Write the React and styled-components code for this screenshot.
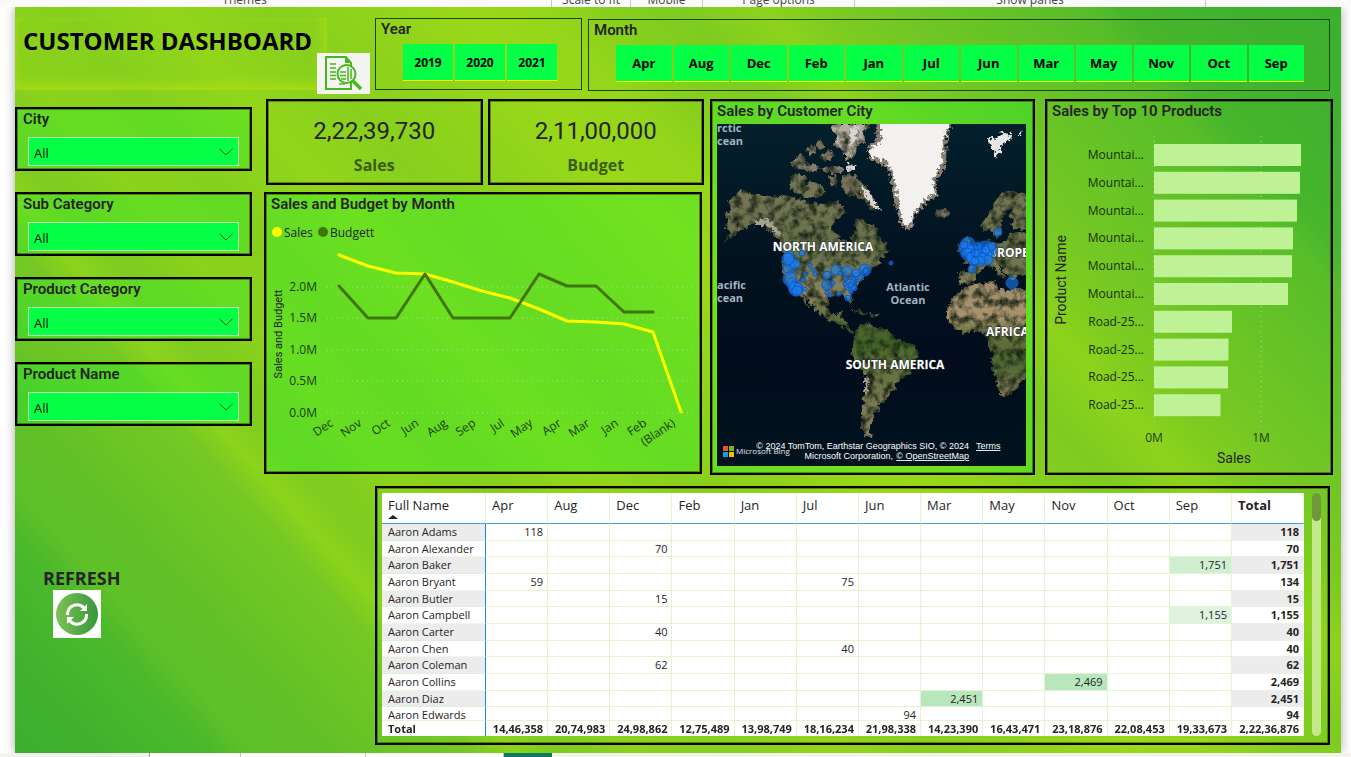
import React from "react";
import styled, { createGlobalStyle } from "styled-components";

const UI = '"Open Sans", "Noto Sans", sans-serif';
const DIN = 'Roboto, "Liberation Sans", sans-serif';

const GlobalStyle = createGlobalStyle`
  * { box-sizing: border-box; }
  html, body { margin: 0; }
  body { background: #fff; color: #252423; font-family: ${UI}; overflow-x: hidden; }
`;

const Page = styled.div`
  display: flex;
  flex-direction: column;
  min-height: 100vh;
`;

/* Ribbon and tab strip */
const Ribbon = styled.div`
  position: relative;
  z-index: 1;
  display: flex;
  align-items: flex-end;
  height: 7px;
  overflow: hidden;
  background: #fafafa;
`;

const RibbonGroup = styled.span`
  flex: ${(p) => p.$grow} 1 0;
  min-width: 0;
  min-height: 7px;
  border-right: 1px solid ${(p) => (p.$divided ? "#c8c6c4" : "transparent")};
  color: #444;
  font-size: 12px;
  line-height: 14px;
  text-align: center;
  white-space: nowrap;
`;

const TabStrip = styled.div`
  display: flex;
  height: 4px;
  background: #f3f2f1;
`;

const Tab = styled.span`
  flex: ${(p) => p.$grow} 1 0;
  background: ${(p) => p.$fill};
  border-right: 1px solid ${(p) => p.$edge || "transparent"};
`;

/* Report canvas */
const Canvas = styled.main`
  flex: 1;
  margin: 0 10px 0 15px;
  padding: 11px 0 8px;
  box-shadow: 0 0 10px rgba(0, 0, 0, 0.35);
  background: linear-gradient(
    48deg,
    #3cb02e 0%,
    #3fb12d 4%,
    #45b62c 7%,
    #4cb92b 10%,
    #5fc028 12%,
    #62c027 16%,
    #6ac525 19%,
    #72c824 22%,
    #76c923 23%,
    #8cd31c 25%,
    #7fcc20 27%,
    #82ce1f 29%,
    #8bd21c 31%,
    #86d01e 36%,
    #92d61a 41%,
    #88d01e 46%,
    #8fd41b 51%,
    #99d819 56%,
    #94d61a 60%,
    #84ce1e 64%,
    #7ecc20 67%,
    #8dd31c 71%,
    #7ccb20 74%,
    #74c724 77%,
    #6ac525 80%,
    #60c028 84%,
    #58bd29 87%,
    #47b62c 89%,
    #40b22d 94%,
    #3cb02e 100%
  );
`;

const Header = styled.header`
  display: flex;
  align-items: flex-start;
  padding-right: 11px;
`;

const TitleBox = styled.div`
  position: relative;
  flex: 0 0 312px;
  height: 72px;
  margin-right: 48px;
  box-shadow: inset -3px -6px 12px rgba(172, 222, 20, 0.8), inset 3px 0 6px rgba(168, 220, 20, 0.4);
`;

const PageTitle = styled.h1`
  margin: 0;
  padding-left: 8px;
  color: #000;
  font-size: 24px;
  font-weight: 700;
  line-height: 46px;
  white-space: nowrap;
`;

const ReportIcon = styled.svg`
  position: absolute;
  left: 302px;
  top: 35px;
  width: 53px;
  height: 41px;
  background: #f4f5f3;
`;

const TilePanel = styled.fieldset`
  flex: ${(p) => (p.$fixed ? `0 0 ${p.$fixed}` : "1 1 0")};
  min-width: 0;
  height: 72px;
  margin: ${(p) => p.$margin || 0};
  padding: 0;
  border: 1px solid #24400a;
`;

const VisualTitle = styled.h2`
  margin: 0;
  padding: 0 5px;
  color: #252423;
  font-family: ${DIN};
  font-size: 15px;
  font-weight: 600;
  line-height: 20px;
  white-space: nowrap;
`;

const Tiles = styled.div`
  display: grid;
  grid-auto-flow: column;
  grid-auto-columns: minmax(0, 1fr);
  gap: 2px;
  padding: 5px ${(p) => p.$inset} 0 27px;
`;

const Tile = styled.button`
  height: 37px;
  padding: 0;
  border: 0;
  border-bottom: 1px solid #f6ff00;
  background: #04ff46;
  color: #000;
  font-family: ${UI};
  font-size: ${(p) => p.$size};
  font-weight: 700;
`;

const Body = styled.div`
  display: flex;
  gap: 12px;
  padding: 8px 8px 0 0;
`;

const Sidebar = styled.aside`
  display: flex;
  flex-direction: column;
  flex: 0 0 237px;
  gap: 21px;
  padding-top: 8px;
`;

const Panel = styled.section`
  min-width: 0;
  border: 2px solid #000;
  box-shadow: inset 0 0 0 1px rgba(0, 0, 0, 0.35);
  background: ${(p) => (p.$tinted ? "rgba(8, 250, 50, 0.27)" : "transparent")};
`;

const SlicerPanel = styled(Panel)`
  height: 64px;
`;

const SlicerLabel = styled.label`
  display: block;
  padding-left: 6px;
  font-family: ${DIN};
  font-size: 15px;
  font-weight: 600;
  line-height: 20px;
`;

const SelectWrap = styled.div`
  position: relative;
  margin: 8px 11px 0;
`;

const Select = styled.select`
  display: block;
  width: 100%;
  height: 29px;
  padding: 3px 5px 0;
  appearance: none;
  border: 1px solid #b8f3b0;
  border-radius: 0;
  background: #04ff46;
  color: #111;
  font-family: ${UI};
  font-size: 13px;
`;

const Chevron = styled.svg`
  position: absolute;
  right: 6px;
  top: 11px;
  width: 14px;
  height: 8px;
  pointer-events: none;
`;

const Refresh = styled.div`
  margin-top: 119px;
  padding-left: 28px;
`;

const RefreshTitle = styled.h2`
  margin: 0;
  color: #252423;
  font-size: 18px;
  font-weight: 700;
  line-height: 24px;
`;

const RefreshButton = styled.button`
  display: block;
  width: 48px;
  height: 48px;
  margin-left: 10px;
  padding: 0;
  border: 0;
  background: #fff;
`;

const Main = styled.div`
  flex: 1;
  min-width: 0;
  display: flex;
  flex-direction: column;
  gap: 11px;
`;

const Visuals = styled.div`
  display: grid;
  grid-template-columns: minmax(0, 440fr) minmax(0, 325fr) minmax(0, 292fr);
  column-gap: 6px;
`;

const Overview = styled.div`
  display: flex;
  flex-direction: column;
  gap: 7px;
`;

const Cards = styled.div`
  display: grid;
  grid-template-columns: 1fr 1fr;
  gap: 5px;
  padding-left: 2px;
`;

const Card = styled(Panel)`
  height: 86px;
  padding-top: 14px;
  text-align: center;
`;

const CardValue = styled.div`
  font-family: ${DIN};
  font-size: 24px;
  line-height: 32px;
`;

const CardLabel = styled.div`
  padding-top: 4px;
  color: #3b5c0c;
  font-size: 16px;
  font-weight: 700;
  line-height: 28px;
`;

const TrendPanel = styled(Panel)`
  margin-right: 2px;
`;

const ProductsPanel = styled(Panel)`
  margin-left: 4px;
`;

const Chart = styled.svg`
  display: block;
  width: 100%;
  height: auto;
  font-family: ${UI};
`;

const MapFrame = styled.div`
  margin: 3px 7px 7px 5px;
`;

const TablePanel = styled(Panel)`
  display: flex;
  gap: 8px;
  height: 259px;
  margin: 0 3px 0 111px;
  padding: 5px 7px 7px 5px;
`;

const TableView = styled.div`
  flex: 1;
  min-width: 0;
  overflow: hidden;
  height: 243px;
  background: #fff;
`;

const Table = styled.table`
  width: 100%;
  table-layout: fixed;
  border-collapse: separate;
  border-spacing: 0;
  font-size: 11px;
  line-height: 14px;
`;

const NameCol = styled.col`
  width: 104px;
`;

const TotalCol = styled.col`
  width: 72px;
`;

const HeadCell = styled.th`
  position: relative;
  height: 31px;
  padding: 3px 6px 0;
  border-right: 1px solid #e3f5d0;
  border-bottom: 1px solid #3d9be9;
  font-size: 13px;
  font-weight: ${(p) => (p.$bold ? 700 : 400)};
  line-height: 18px;
  text-align: left;
  vertical-align: top;
`;

const SortMark = styled.span`
  position: absolute;
  left: 6px;
  bottom: 4px;
  border: 5px solid transparent;
  border-top: 0;
  border-bottom: 4px solid #252423;
`;

const Row = styled.tr`
  height: 17px;
  &:nth-child(3n + 2) { height: 16px; }
`;

const NameCell = styled.th`
  padding: 0 6px;
  border-right: 1px solid #1a86d9;
  border-bottom: 1px solid ${(p) => (p.$shade ? "#dfeeda" : "#eef8e4")};
  background: ${(p) => (p.$shade ? "#ececec" : "#fff")};
  font-weight: 400;
  text-align: left;
  white-space: nowrap;
`;

const heat = { 1: "#d0eed2", 2: "#dff3e0", 3: "#b9e7bd" };

const Cell = styled.td`
  padding: 0 4px;
  border-right: 1px solid #e3f5d0;
  border-bottom: 1px solid #e3f5d0;
  background: ${(p) => heat[p.$heat] || "transparent"};
  text-align: right;
`;

const TotalCell = styled.td`
  padding: 0 5px;
  border-bottom: 1px solid #e8f3de;
  background: ${(p) => (p.$shade ? "#ececec" : "#fff")};
  font-weight: 700;
  text-align: right;
`;

const Foot = styled.tfoot`
  position: sticky;
  bottom: 0;
  background: #fff;
  font-weight: 700;
`;

const FootCell = styled.td`
  height: 16px;
  padding: 0 4px;
  border-top: 1px solid #e3f5d0;
  border-right: 1px solid ${(p) => (p.$name ? "#1a86d9" : "#e3f5d0")};
  text-align: ${(p) => (p.$name ? "left" : "right")};
  ${(p) => p.$name && "padding-left: 6px;"}
  white-space: nowrap;
`;

const ScrollTrack = styled.div`
  flex: 0 0 9px;
  border-radius: 5px;
  background: #c4e98b;
`;

const ScrollThumb = styled.div`
  height: 28px;
  border-radius: 5px;
  background: #6f983b;
`;

const years = ["2019", "2020", "2021"];
const months = ["Apr", "Aug", "Dec", "Feb", "Jan", "Jul", "Jun", "Mar", "May", "Nov", "Oct", "Sep"];
const slicers = ["City", "Sub Category", "Product Category", "Product Name"];

const people = [
  ["Aaron Adams", { Apr: "118" }, "118"],
  ["Aaron Alexander", { Dec: "70" }, "70"],
  ["Aaron Baker", { Sep: "1,751" }, "1,751", 1],
  ["Aaron Bryant", { Apr: "59", Jul: "75" }, "134"],
  ["Aaron Butler", { Dec: "15" }, "15"],
  ["Aaron Campbell", { Sep: "1,155" }, "1,155", 2],
  ["Aaron Carter", { Dec: "40" }, "40"],
  ["Aaron Chen", { Jul: "40" }, "40"],
  ["Aaron Coleman", { Dec: "62" }, "62"],
  ["Aaron Collins", { Nov: "2,469" }, "2,469", 3],
  ["Aaron Diaz", { Mar: "2,451" }, "2,451", 3],
  ["Aaron Edwards", { Jun: "94" }, "94"],
];

const totals = [
  "14,46,358", "20,74,983", "24,98,862", "12,75,489", "13,98,749", "18,16,234",
  "21,98,338", "14,23,390", "16,43,471", "23,18,876", "22,08,453", "19,33,673",
];

const trendMonths = ["Dec", "Nov", "Oct", "Jun", "Aug", "Sep", "Jul", "May", "Apr", "Mar", "Jan", "Feb", "(Blank)"];
const trendTicks = [["2.0M", 73], ["1.5M", 104], ["1.0M", 136], ["0.5M", 167], ["0.0M", 199]];

function TrendChart() {
  return (
    <Chart viewBox="0 0 434 258" role="img" aria-label="Sales and Budget by Month">
      <circle cx="11" cy="18" r="5" fill="#fbff00" />
      <text x="18" y="23" fontSize="12" fill="#252423">Sales</text>
      <circle cx="57" cy="18" r="5" fill="#41750a" />
      <text x="64" y="23" fontSize="12" fill="#252423">Budgett</text>
      <text transform="translate(16 120) rotate(-90)" textAnchor="middle" fontFamily={DIN} fontSize="11" fill="#252423">
        Sales and Budgett
      </text>
      {trendTicks.map(([label, y]) => (
        <g key={label}>
          <line x1="61" x2="427" y1={y} y2={y} stroke="#b5d89b" strokeWidth="1" strokeDasharray="1 4" />
          <text x="51" y={y + 4} textAnchor="end" fontSize="12" fill="#1c3d0d">{label}</text>
        </g>
      ))}
      {trendMonths.map((m, i) => (
        <text key={m} transform={`translate(${68 + i * 28.5} 211) rotate(-34)`} textAnchor="end" fontSize="12" fill="#1c3d0d">
          {m}
        </text>
      ))}
      <polyline
        fill="none" stroke="#fbff00" strokeWidth="3" strokeLinejoin="round" strokeLinecap="round"
        points="73,41 102,52 130,59 159,60 187,68 216,77 244,84 273,95 301,107 330,108 358,110 387,118 415,198"
      />
      <polyline
        fill="none" stroke="#41750a" strokeWidth="3" strokeLinejoin="round" strokeLinecap="round"
        points="73,72 102,104 130,104 159,60 187,104 216,104 244,104 273,60 301,72 330,72 358,98 387,98"
      />
    </Chart>
  );
}

const products = [
  ["Mountai...", 147], ["Mountai...", 146], ["Mountai...", 143], ["Mountai...", 139], ["Mountai...", 138],
  ["Mountai...", 134], ["Road-25...", 78], ["Road-25...", 74.5], ["Road-25...", 74], ["Road-25...", 66.5],
];

function ProductsChart() {
  return (
    <Chart viewBox="0 0 284 352" role="img" aria-label="Sales by Top 10 Products">
      {[107, 214].map((x) => (
        <line key={x} x1={x} x2={x} y1="15" y2="308" stroke="#b0d89c" strokeWidth="1" strokeDasharray="1 4" />
      ))}
      {products.map(([name, w], i) => (
        <g key={i}>
          <text x="97" y={38 + i * 27.8} textAnchor="end" fontSize="12" fill="#173009">{name}</text>
          <rect x="107" y={23 + i * 27.8} width={w} height="22" fill="#bff296" />
        </g>
      ))}
      <text x="107" y="321" textAnchor="middle" fontSize="12" fill="#1c3d0d">0M</text>
      <text x="214" y="321" textAnchor="middle" fontSize="12" fill="#1c3d0d">1M</text>
      <text x="187" y="342" textAnchor="middle" fontFamily={DIN} fontSize="14" fill="#252423">Sales</text>
      <text transform="translate(19 159) rotate(-90)" textAnchor="middle" fontFamily={DIN} fontSize="14" fill="#252423">
        Product Name
      </text>
    </Chart>
  );
}

const bubbles = [
  [72, 132, 5], [74, 138, 5], [72, 144, 6], [78, 140, 5], [71, 135, 6], [85, 129, 3], [93, 141, 2], [96, 146, 2],
  [98, 150, 2], [88, 150, 2], [73, 155, 7], [75, 159, 5], [77, 163, 6], [79, 165, 7], [81, 163, 4], [80, 167, 5],
  [86, 156, 2], [88, 165, 2], [110, 151, 4], [119, 146, 5], [123, 149, 2], [130, 147, 5], [110, 161, 5], [116, 159, 2],
  [148, 146, 6], [149, 147, 3], [141, 153, 5], [139, 149, 4], [136, 156, 3], [133, 161, 6], [134, 161, 3], [129, 155, 2],
  [128, 160, 2], [137, 164, 3], [110, 169, 2], [113, 171, 2], [122, 170, 2], [131, 174, 3], [134, 168, 2], [174, 139, 2],
  [251, 120, 7], [249, 125, 7], [255, 128, 7], [250, 130, 6], [257, 134, 7], [254, 133, 5], [258, 129, 4], [262, 130, 5],
  [268, 124, 7], [272, 127, 7], [269, 131, 6], [265, 134, 5], [271, 136, 5], [275, 122, 4], [269, 126, 4], [263, 137, 5],
  [255, 145, 4], [281, 108, 4], [295, 159, 6], [258, 137, 4], [247, 121, 4], [261, 122, 4],
];

const land = {
  america:
    "M23 66 L32 69 41 71 54 73 71 71 84 76 95 79 107 80 115 78 122 83 128 86 124 92 117 97 115 106 122 113 128 115 131 123 134 122 134 113 139 107 137 97 143 94 149 99 154 103 158 101 162 112 170 122 172 128 163 134 158 136 166 138 156 144 148 148 145 157 138 163 133 169 136 177 133 180 129 172 120 171 112 173 110 182 114 190 121 190 126 186 124 194 129 197 131 204 137 207 136 210 128 204 120 199 110 195 101 189 93 178 87 171 91 180 95 186 89 180 83 170 72 162 67 153 65 140 67 128 62 117 54 108 46 101 38 99 28 104 17 112 6 117 15 109 8 104 11 98 8 90 15 86 10 78 16 74Z",
  south:
    "M140 206 L144 201 151 199 158 203 167 205 175 208 179 215 188 219 198 222 202 229 197 238 194 248 189 253 181 257 177 265 171 273 167 279 161 281 162 286 156 291 157 297 152 303 152 310 157 315 148 311 144 304 144 293 146 281 148 269 150 252 143 244 138 236 134 228 137 217Z",
  africa:
    "M245 164 L254 161 265 159 277 158 280 164 290 167 299 165 315 167 315 250 303 258 301 264 293 271 285 273 281 266 278 252 274 240 276 230 270 221 270 213 264 208 255 207 246 209 239 205 233 199 229 192 231 183 237 173Z",
  europe:
    "M241 148 L252 148 253 142 246 137 256 133 264 126 269 123 271 116 275 120 283 119 290 116 294 109 302 108 315 110 315 150 300 152 296 158 290 152 284 143 280 139 286 149 289 155 282 151 276 143 270 142 264 145 259 154 255 159 242 160Z",
  nordic:
    "M265 106 L264 99 271 92 276 81 283 72 292 66 302 69 315 72 315 104 298 105 293 101 298 95 292 94 297 84 290 86 285 95 285 104 281 114 276 111 274 103 270 108Z",
};

function WorldMap() {
  const label = { fontSize: 12, fontWeight: 700, fill: "#fff", stroke: "#2b3436", strokeWidth: 1, paintOrder: "stroke" };
  const sea = { fontSize: 11, fontWeight: 700, fill: "#a3b5c4" };
  const credit = { fontSize: 9, fontFamily: '"Liberation Sans", sans-serif', fill: "#fff" };
  return (
    <Chart viewBox="0 0 309 342" role="img" aria-label="Sales by Customer City">
      <defs>
        <linearGradient id="ocean" x1="0" y1="0" x2="0" y2="1">
          <stop offset="0" stopColor="#03202c" />
          <stop offset="0.4" stopColor="#02121f" />
          <stop offset="0.7" stopColor="#020c1c" />
          <stop offset="1" stopColor="#02131f" />
        </linearGradient>
        <linearGradient id="soil" gradientUnits="userSpaceOnUse" x1="0" y1="60" x2="0" y2="310">
          <stop offset="0" stopColor="#787659" />
          <stop offset="0.25" stopColor="#667048" />
          <stop offset="0.45" stopColor="#8a8560" />
          <stop offset="0.55" stopColor="#56683a" />
          <stop offset="0.63" stopColor="#3d6424" />
          <stop offset="0.72" stopColor="#5f6f3c" />
          <stop offset="0.85" stopColor="#76784c" />
          <stop offset="1" stopColor="#8a7e68" />
        </linearGradient>
        <linearGradient id="sahara" gradientUnits="userSpaceOnUse" x1="0" y1="160" x2="0" y2="272">
          <stop offset="0" stopColor="#a08c6c" />
          <stop offset="0.3" stopColor="#a8946f" />
          <stop offset="0.45" stopColor="#66713d" />
          <stop offset="0.7" stopColor="#4d6832" />
          <stop offset="1" stopColor="#807456" />
        </linearGradient>
        <filter id="terrain" x="-5%" y="-5%" width="110%" height="110%" colorInterpolationFilters="sRGB">
          <feTurbulence type="fractalNoise" baseFrequency="0.22" numOctaves="3" seed="4" result="rough" />
          <feDisplacementMap in="SourceGraphic" in2="rough" scale="7" xChannelSelector="R" yChannelSelector="G" result="coast" />
          <feTurbulence type="fractalNoise" baseFrequency="0.12" numOctaves="4" seed="9" result="n" />
          <feColorMatrix in="n" type="matrix" values="0 0 0 0 0.1  0 0 0 0 0.14  0 0 0 0 0.08  2.4 0 0 0 -0.95" result="dark" />
          <feComposite in="dark" in2="coast" operator="in" result="shade" />
          <feMerge>
            <feMergeNode in="coast" />
            <feMergeNode in="shade" />
          </feMerge>
        </filter>
        <filter id="ice" x="-5%" y="-5%" width="110%" height="110%" colorInterpolationFilters="sRGB">
          <feTurbulence type="fractalNoise" baseFrequency="0.3" numOctaves="3" seed="2" result="rough" />
          <feDisplacementMap in="SourceGraphic" in2="rough" scale="9" xChannelSelector="R" yChannelSelector="G" />
        </filter>
        <clipPath id="frame"><rect width="309" height="342" /></clipPath>
      </defs>
      <g clipPath="url(#frame)">
        <rect width="309" height="342" fill="url(#ocean)" />
        <g filter="url(#terrain)" fill="url(#soil)">
          <path d={land.america} />
          <path d={land.south} />
          <path d={land.europe} />
          <path d={land.nordic} />
          <path d={land.africa} fill="url(#sahara)" />
          <path d="M73 53 L82 49 90 54 86 61 95 58 104 60 109 67 101 74 88 74 80 70 74 66Z" />
          <path d="M75 38 L82 31 90 33 87 41 96 40 103 43 96 48 84 45 76 44Z M90 24 L97 21 99 29 92 31Z M104 31 L111 26 118 30 113 37 106 36Z M104 44 L116 42 128 44 124 49 110 49Z" fill="#857d69" />
          <path d="M112 53 L119 50 121 60 114 63Z M124 52 L133 49 141 55 150 64 157 75 161 85 154 86 148 78 139 72 131 72 124 62Z M98 19 L105 17 108 24 101 25Z M114 80 L121 77 127 82 121 87Z" fill="#776f58" />
          <path d="M113 3 L120 0 153 0 147 9 148 18 139 23 137 34 129 36 126 26 118 23 119 12Z" fill="#b7aea0" />
          <path d="M220 86 L228 85 233 89 230 93 222 93 218 90Z" fill="#80796a" />
          <path d="M246 116 L251 113 253 121 258 129 251 132 247 128 249 122Z M241 122 L245 121 245 127 240 128Z" />
          <path d="M134 186 L142 186 151 190 144 191Z M154 190 L162 191 160 194 153 193Z" fill="#5a6642" />
        </g>
        <g filter="url(#ice)">
          <path d="M158 -6 L238 -6 230 14 229 40 219 58 220 72 207 81 199 91 193 106 184 102 180 86 175 68 173 50 166 40 154 37 149 24 160 15Z" fill="#857d70" />
          <path d="M164 -6 L234 -6 226 16 225 40 216 55 218 69 205 78 197 89 191 103 185 98 183 84 179 66 176 48 169 36 154 33 152 26 164 18Z" fill="#f3f1f0" />
          <path d="M272 13 L280 14 285 9 294 10 293 17 286 19 283 27 280 34 277 27 273 22Z M301 8 L305 9 303 11Z" fill="#e6e6e2" />
          <path d="M143 61 L150 65 157 78 163 86 158 85 149 73Z M129 41 L137 40 138 46 130 47Z M133 4 L141 3 139 14 134 22Z" fill="#d9d6d0" />
          <path d="M36 98 L46 94 55 99 65 110 61 111 50 101 38 101Z M148 247 L151 259 149 273 147 270Z" fill="#a9a294" />
        </g>
        <text x="106" y="127" textAnchor="middle" {...label}>NORTH AMERICA</text>
        <text x="178" y="245" textAnchor="middle" {...label}>SOUTH AMERICA</text>
        <text x="271" y="133" {...label}>UROPE</text>
        <text x="269" y="212" {...label}>AFRICA</text>
        <text x="0" y="8" {...sea}>rctic</text>
        <text x="0" y="21" {...sea}>cean</text>
        <text x="0" y="165" {...sea}>acific</text>
        <text x="0" y="178" {...sea}>cean</text>
        <text x="191" y="167" textAnchor="middle" {...sea}>Atlantic</text>
        <text x="191" y="180" textAnchor="middle" {...sea}>Ocean</text>
        {bubbles.map(([cx, cy, r], i) => (
          <circle key={i} cx={cx} cy={cy} r={r} fill="#1a7ef0" fillOpacity="0.6" stroke="#0a58cc" strokeWidth="1" />
        ))}
        <rect x="6" y="322" width="5" height="5" fill="#f25022" />
        <rect x="12" y="322" width="5" height="5" fill="#7fba00" />
        <rect x="6" y="328" width="5" height="5" fill="#00a4ef" />
        <rect x="12" y="328" width="5" height="5" fill="#ffb900" />
        <text x="19" y="330" fontSize="8" fill="#e8e8e8">Microsoft Bing</text>
        <text x="252" y="325" textAnchor="end" {...credit}>© 2024 TomTom, Earthstar Geographics SIO, © 2024</text>
        <a href="#terms"><text x="259" y="325" textDecoration="underline" {...credit}>Terms</text></a>
        <text x="176" y="335" textAnchor="end" {...credit}>Microsoft Corporation,</text>
        <a href="#osm"><text x="252" y="335" textAnchor="end" textDecoration="underline" {...credit}>© OpenStreetMap</text></a>
      </g>
    </Chart>
  );
}

function Slicer({ name }) {
  const id = name.toLowerCase().replace(/ /g, "-");
  return (
    <SlicerPanel $tinted>
      <SlicerLabel htmlFor={id}>{name}</SlicerLabel>
      <SelectWrap>
        <Select id={id}><option>All</option></Select>
        <Chevron viewBox="0 0 14 8" fill="none" stroke="#1d5c1d" aria-hidden="true">
          <path d="M0.5 0.8 L7 7 L13.5 0.8" />
        </Chevron>
      </SelectWrap>
    </SlicerPanel>
  );
}

export default function App() {
  return (
    <Page>
      <GlobalStyle />
      <Ribbon>
        <RibbonGroup $grow={489}>Themes</RibbonGroup>
        <RibbonGroup $grow={61} $divided />
        <RibbonGroup $grow={78} $divided>Scale to fit</RibbonGroup>
        <RibbonGroup $grow={71} $divided>Mobile</RibbonGroup>
        <RibbonGroup $grow={151} $divided>Page options</RibbonGroup>
        <RibbonGroup $grow={350} $divided>Show panes</RibbonGroup>
        <RibbonGroup $grow={144} />
      </Ribbon>

      <Canvas>
        <Header>
          <TitleBox>
            <PageTitle>CUSTOMER DASHBOARD</PageTitle>
            <ReportIcon viewBox="0 0 53 41" fill="none" stroke="#42b814" strokeWidth="2" aria-hidden="true">
              <path d="M34 29 V36 H9 V4 H29 L34 10 V13" />
              <path d="M28 3 V10 H35 Z" fill="#42b814" stroke="none" />
              <path d="M13 11 H19 M13 15 H19 M13 19 H19 M13 22.500 H19 M13 26 H19 M22 31 H28" strokeWidth="1.600" />
              <circle cx="29.500" cy="21" r="9" fill="#f4f5f3" />
              <path d="M23 19 H29 M23 22.500 H29 M24 26 H29" strokeWidth="1.600" />
              <path d="M31 14 V28 M34 16 V26" strokeWidth="1.500" />
              <path d="M36 28 L44 36" strokeWidth="3.500" />
            </ReportIcon>
          </TitleBox>
          <TilePanel $fixed="207px" aria-label="Year">
            <VisualTitle>Year</VisualTitle>
            <Tiles $inset="24px">
              {years.map((y) => <Tile key={y} $size="12px">{y}</Tile>)}
            </Tiles>
          </TilePanel>
          <TilePanel $margin="1px 0 0 6px" aria-label="Month">
            <VisualTitle>Month</VisualTitle>
            <Tiles $inset="25px">
              {months.map((m) => <Tile key={m} $size="13px">{m}</Tile>)}
            </Tiles>
          </TilePanel>
        </Header>

        <Body>
          <Sidebar>
            {slicers.map((s) => <Slicer key={s} name={s} />)}
            <Refresh>
              <RefreshTitle>REFRESH</RefreshTitle>
              <RefreshButton aria-label="Refresh">
                <svg viewBox="0 0 48 48" width="48" height="48" aria-hidden="true">
                  <defs>
                    <linearGradient id="disc"><stop offset="0" stopColor="#7cc255" /><stop offset="1" stopColor="#38973a" /></linearGradient>
                  </defs>
                  <circle cx="24" cy="24" r="21" fill="url(#disc)" />
                  <g fill="none" stroke="#fff" strokeWidth="3">
                    <path d="M14.500 25 A9.500 9.500 0 0 1 31 18" />
                    <path d="M33.500 24 A9.500 9.500 0 0 1 17 31" />
                  </g>
                  <path d="M34 14 V21 H27 Z M14 34 V27 H21 Z" fill="#fff" />
                </svg>
              </RefreshButton>
            </Refresh>
          </Sidebar>

          <Main>
            <Visuals>
              <Overview>
                <Cards>
                  <Card><CardValue>2,22,39,730</CardValue><CardLabel>Sales</CardLabel></Card>
                  <Card><CardValue>2,11,00,000</CardValue><CardLabel>Budget</CardLabel></Card>
                </Cards>
                <TrendPanel $tinted>
                  <VisualTitle>Sales and Budget by Month</VisualTitle>
                  <TrendChart />
                </TrendPanel>
              </Overview>
              <Panel $tinted>
                <VisualTitle>Sales by Customer City</VisualTitle>
                <MapFrame><WorldMap /></MapFrame>
              </Panel>
              <ProductsPanel>
                <VisualTitle>Sales by Top 10 Products</VisualTitle>
                <ProductsChart />
              </ProductsPanel>
            </Visuals>

            <TablePanel>
              <TableView>
                <Table>
                  <colgroup>
                    <NameCol />
                    {months.map((m) => <col key={m} />)}
                    <TotalCol />
                  </colgroup>
                  <thead>
                    <tr>
                      <HeadCell>Full Name<SortMark /></HeadCell>
                      {months.map((m) => <HeadCell key={m}>{m}</HeadCell>)}
                      <HeadCell $bold>Total</HeadCell>
                    </tr>
                  </thead>
                  <tbody>
                    {people.map(([name, sales, total, level], i) => (
                      <Row key={name}>
                        <NameCell scope="row" $shade={i % 2 === 0}>{name}</NameCell>
                        {months.map((m) => (
                          <Cell key={m} $heat={sales[m] && level}>{sales[m]}</Cell>
                        ))}
                        <TotalCell $shade={i % 2 === 0}>{total}</TotalCell>
                      </Row>
                    ))}
                  </tbody>
                  <Foot>
                    <tr>
                      <FootCell $name>Total</FootCell>
                      {totals.map((t, i) => <FootCell key={months[i]}>{t}</FootCell>)}
                      <FootCell>2,22,36,876</FootCell>
                    </tr>
                  </Foot>
                </Table>
              </TableView>
              <ScrollTrack><ScrollThumb /></ScrollTrack>
            </TablePanel>
          </Main>
        </Body>
      </Canvas>

      <TabStrip>
        <Tab $grow={149} $fill="#f3f2f1" $edge="#a19f9d" />
        <Tab $grow={90} $fill="#fff" $edge="#c8c6c4" />
        <Tab $grow={124} $fill="#fff" $edge="#c8c6c4" />
        <Tab $grow={137} $fill="#fff" $edge="#c8c6c4" />
        <Tab $grow={47} $fill="#117865" />
        <Tab $grow={798} $fill="#f3f2f1" />
      </TabStrip>
    </Page>
  );
}
